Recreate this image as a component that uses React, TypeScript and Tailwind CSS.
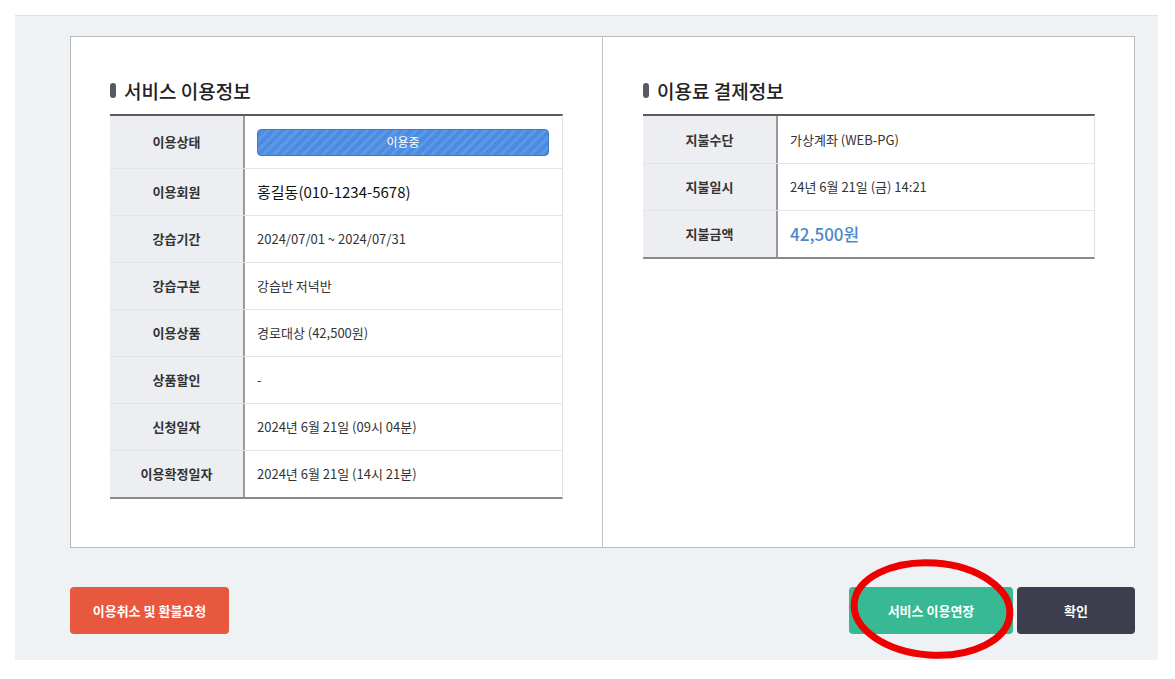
import React from "react";

const font = { fontFamily: '"Noto Sans CJK KR", "Noto Sans", sans-serif' };

type Row = { label: string; value: React.ReactNode; tall?: boolean };

function InfoTable({ rows, width }: { rows: Row[]; width: string }) {
  return (
    <div className={`${width} border-t-2 border-t-[#5a5a5a] border-b-2 border-b-[#8a8a8a] border-r border-r-[#e0e0e0]`}>
      {rows.map((r, i) => (
        <div
          key={r.label}
          className={`flex ${i > 0 ? "border-t border-t-[#e2e4e7]" : ""} ${r.tall ? "h-[52px]" : "h-[47px]"}`}
        >
          <div className="w-[135px] shrink-0 bg-[#eceef1] border-r-2 border-r-[#9a9a9a] flex items-center justify-center text-[13px] font-bold text-[#333]">
            {r.label}
          </div>
          <div className="flex-1 flex items-center pl-[12px] pr-[13px] text-[13px] text-[#333]">
            {r.value}
          </div>
        </div>
      ))}
    </div>
  );
}

function Heading({ children }: { children: React.ReactNode }) {
  return (
    <div className="flex items-center h-[24px] mb-[12px]">
      <span className="w-[6px] h-[15px] rounded-[3px] bg-[#555a64] mr-[8px]" />
      <span className="text-[19px] font-medium text-[#222] leading-none">{children}</span>
    </div>
  );
}

export default function App() {
  const leftRows: Row[] = [
    {
      label: "이용상태",
      tall: true,
      value: (
        <div
          className="w-full h-[27px] rounded-[4px] border border-[#3d79cf] flex items-center justify-center text-[12px] text-white"
          style={{
            backgroundImage:
              "repeating-linear-gradient(-45deg, #4b8be2 0px, #4b8be2 4px, #5d98e6 4px, #5d98e6 7px)",
          }}
        >
          이용중
        </div>
      ),
    },
    { label: "이용회원", value: <span className="text-[15px] text-[#111]">홍길동(010-1234-5678)</span> },
    { label: "강습기간", value: "2024/07/01 ~ 2024/07/31" },
    { label: "강습구분", value: "강습반 저녁반" },
    { label: "이용상품", value: "경로대상 (42,500원)" },
    { label: "상품할인", value: "-" },
    { label: "신청일자", value: "2024년 6월 21일 (09시 04분)" },
    { label: "이용확정일자", value: "2024년 6월 21일 (14시 21분)" },
  ];
  const rightRows: Row[] = [
    { label: "지불수단", value: "가상계좌 (WEB-PG)" },
    { label: "지불일시", value: "24년 6월 21일 (금) 14:21" },
    { label: "지불금액", value: <span className="text-[17px] font-medium text-[#4d88cc]">42,500원</span> },
  ];

  return (
    <div className="w-full h-[679px] bg-white pt-[15px] pl-[15px]" style={font}>
      <div className="w-[1143px] h-[645px] bg-[#eff2f5] border-t border-t-[#dde1e6] pt-[20px] pl-[55px] pr-[23px]">
        <div className="w-[1065px] h-[512px] bg-white border border-[#b8b8b8] flex">
          <div className="w-[532px] border-r border-r-[#c4c4c4] pl-[39px] pt-[41px]">
            <Heading>서비스 이용정보</Heading>
            <InfoTable rows={leftRows} width="w-[453px]" />
          </div>
          <div className="flex-1 pl-[40px] pt-[41px]">
            <Heading>이용료 결제정보</Heading>
            <InfoTable rows={rightRows} width="w-[452px]" />
          </div>
        </div>
        <div className="flex items-center mt-[39px]">
          <button className="w-[159px] h-[47px] rounded-[4px] bg-[#e8583f] text-white text-[13px] font-bold">
            이용취소 및 환불요청
          </button>
          <div className="flex-1" />
          <div className="relative">
            <button className="w-[164px] h-[47px] rounded-[4px] bg-[#38b994] text-white text-[13px] font-bold">
              서비스 이용연장
            </button>
            <svg
              className="absolute pointer-events-none"
              style={{ left: -4, top: -30 }}
              width="176"
              height="106"
              viewBox="0 0 176 106"
            >
              <ellipse
                cx="87"
                cy="52"
                rx="78"
                ry="46"
                fill="none"
                stroke="#ee0000"
                strokeWidth="7"
                transform="rotate(4 87 52)"
              />
            </svg>
          </div>
          <button className="ml-[4px] w-[118px] h-[47px] rounded-[4px] bg-[#3c3e4e] text-white text-[13px] font-bold">
            확인
          </button>
        </div>
      </div>
    </div>
  );
}
